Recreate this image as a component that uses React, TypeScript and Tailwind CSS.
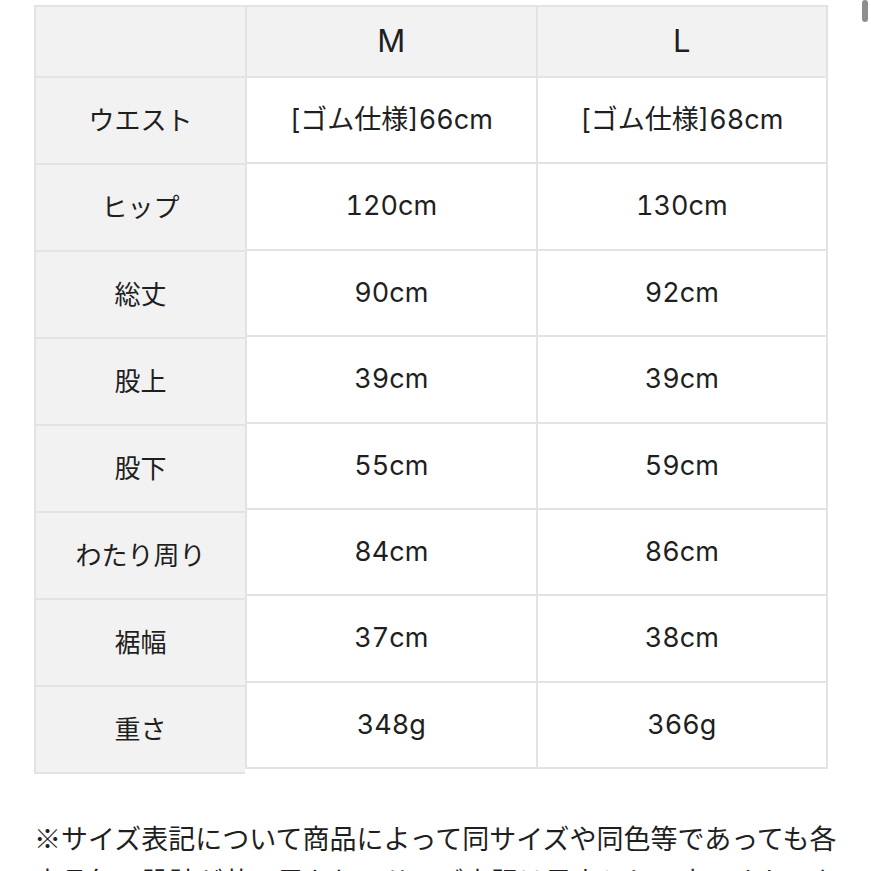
const cjk = { fontFamily: '"Noto Sans CJK JP", "Noto Sans", sans-serif' };
const mixed = { fontFamily: 'Inter, "Noto Sans CJK JP", sans-serif' };

const labels = ["ウエスト", "ヒップ", "総丈", "股上", "股下", "わたり周り", "裾幅", "重さ"];

const rows: [string, string][] = [
  ["[ゴム仕様]66cm", "[ゴム仕様]68cm"],
  ["120cm", "130cm"],
  ["90cm", "92cm"],
  ["39cm", "39cm"],
  ["55cm", "59cm"],
  ["84cm", "86cm"],
  ["37cm", "38cm"],
  ["348g", "366g"],
];

export default function App() {
  return (
    <div
      className="relative w-[871px] h-[871px] overflow-hidden bg-white text-[#1f1f1f]"
      style={cjk}
    >
      {/* scrollbar thumb */}
      <div className="absolute right-[3px] top-0 w-[6px] h-[22px] rounded-full bg-[#8e8e8e]" />

      <div className="pl-[34px] pt-[5px]">
        <div className="flex items-start">
          {/* Label column */}
          <div className="flex flex-col gap-[2px] bg-[#e3e3e3] p-[2px] pr-0 w-[211px]">
            <div className="h-[69px] bg-[#f2f2f2]" />
            {labels.map((l) => (
              <div
                key={l}
                className="h-[85px] bg-[#f2f2f2] flex items-center justify-center pb-[4px] text-[26px]"
              >
                {l}
              </div>
            ))}
          </div>

          {/* Size columns */}
          <div
            className="grid grid-cols-2 gap-[2px] bg-[#e3e3e3] p-[2px] w-[583px] tabular-nums"
            style={mixed}
          >
            <div className="h-[69px] bg-[#f2f2f2] flex items-center justify-center text-[31px]">
              M
            </div>
            <div className="h-[69px] bg-[#f2f2f2] flex items-center justify-center text-[31px]">
              L
            </div>
            {rows.map(([m, l], i) => (
              <div key={i} className="contents">
                <div className="h-[84.4px] bg-white flex items-center justify-center text-[27px]">
                  {m}
                </div>
                <div className="h-[84.4px] bg-white flex items-center justify-center text-[27px]">
                  {l}
                </div>
              </div>
            ))}
          </div>
        </div>

        <p className="mt-[42px] w-[820px] text-[27px] leading-[43px]">
          ※サイズ表記について商品によって同サイズや同色等であっても各商品毎の設計が若干異なり、サイズ表記は目安として表示されております。
        </p>
      </div>
    </div>
  );
}
